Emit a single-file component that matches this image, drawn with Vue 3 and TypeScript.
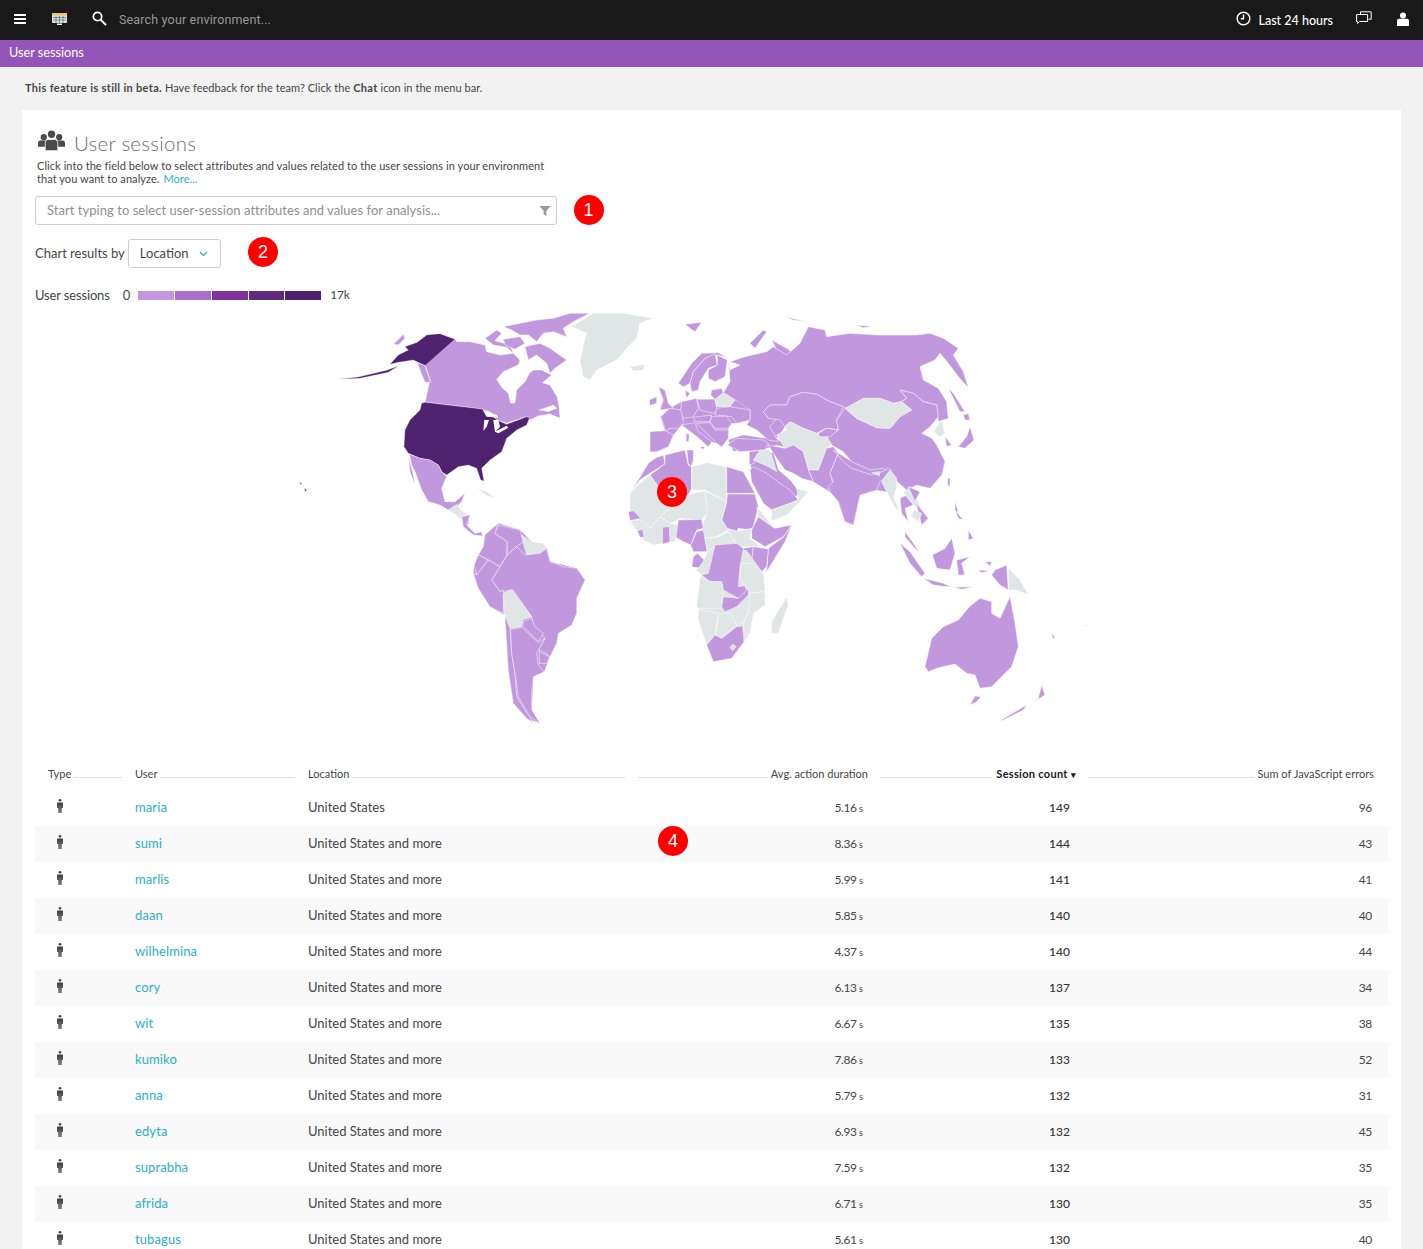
<script setup lang="ts">
type Poly = { c: 'l' | 'd' | 'g' | 'w' | 'bl' | 'bg'; p: string }

const rows = [
  ['maria', 'United States', '5.16', 149, 96],
  ['sumi', 'United States and more', '8.36', 144, 43],
  ['marlis', 'United States and more', '5.99', 141, 41],
  ['daan', 'United States and more', '5.85', 140, 40],
  ['wilhelmina', 'United States and more', '4.37', 140, 44],
  ['cory', 'United States and more', '6.13', 137, 34],
  ['wit', 'United States and more', '6.67', 135, 38],
  ['kumiko', 'United States and more', '7.86', 133, 52],
  ['anna', 'United States and more', '5.79', 132, 31],
  ['edyta', 'United States and more', '6.93', 132, 45],
  ['suprabha', 'United States and more', '7.59', 132, 35],
  ['afrida', 'United States and more', '6.71', 130, 35],
  ['tubagus', 'United States and more', '5.61', 130, 40],
]

const legend = ['#c397df', '#a86fc8', '#7c349c', '#5f2a80', '#4f2270']

// coordinates: (x - 470) * 3, (y - 310) * 3
const canada: Poly[] = [
  { c: 'l', p: '-45,87 -135,165 -120,210 -135,276 35,297 60,306 80,330 110,339 170,320 180,330 205,318 240,312 270,325 268,295 262,262 240,225 218,218 245,195 215,180 190,180 178,190 165,215 140,240 135,278 122,280 115,250 95,232 80,208 100,185 145,165 150,150 130,130 90,135 70,130 50,125 45,105 0,95 -40,95' },
  { c: 'w', p: '205,300 250,285 262,295 235,305' },
  { c: 'l', p: '45,85 80,60 95,70 75,92 120,105 130,130 110,112 70,105' },
  { c: 'l', p: '100,88 150,80 165,100 135,118 105,105' },
  { c: 'l', p: '165,110 210,100 240,115 290,150 255,175 240,190 230,160 200,135 175,150' },
  { c: 'l', p: '100,50 150,40 200,30 250,25 300,10 360,10 310,35 280,55 290,80 250,65 220,70 200,95 175,75 150,75 125,60' },
]

const america: Poly[] = [
  { c: 'd', p: '375,103 330,86 290,90 262,112 225,125 235,135 205,150 180,178 205,172 250,165 285,182' },
  { c: 'l', p: '190,118 220,88 225,100 205,120' },
  { c: 'd', p: '30,222 85,216 170,196 205,183 175,202 90,220' },
  { c: 'l', p: '262,172 285,182 302,232 285,232 270,195' },
  { c: 'd', p: '275,295 285,292 455,312 480,325 500,345 530,358 565,345 590,335 598,340 590,360 560,375 530,400 515,440 480,465 455,490 462,528 452,525 440,490 415,480 385,485 350,510 335,500 325,480 300,465 270,460 235,445 222,425 225,375 240,345 270,315' },
  { c: 'w', p: '458,315 500,330 505,338 470,335' },
  { c: 'w', p: '463,345 477,345 470,365 460,378' },
  { c: 'w', p: '490,345 505,345 510,365 495,382' },
  { c: 'w', p: '495,380 530,362 535,368 505,385' },
  { c: 'l', p: '238,447 270,460 300,465 325,480 335,500 350,515 335,550 345,590 375,590 405,565 395,590 375,610 355,615 330,600 295,590 275,555 255,500 245,480' },
  { c: 'l', p: '235,452 250,510 255,542 240,500' },
  { c: 'g', p: '355,615 380,598 398,620 420,630 400,650 375,628' },
  { c: 'l', p: '395,635 420,628 415,660 400,650' },
  { c: 'g', p: '440,550 470,560 500,580 470,572' },
  { c: 'g', p: '725,65 790,25 880,25 970,40 930,55 920,100 890,130 860,165 800,195 780,225 760,215 750,170 760,120 770,85' },
  { c: 'g', p: '900,185 945,178 940,195 910,198' },
]

const eurasia: Poly[] = [
  { c: 'bl', p: '295,405 340,390 400,400 440,400 470,425 490,420 520,440 535,495 550,530 590,555 600,560 625,590 645,650 670,660 690,570 740,555 770,560 760,490 665,470 625,445 590,430 520,440 440,420 395,435 358,440 365,500 400,580 425,605 470,590 510,565 480,525 445,495 430,445 395,435 310,438' },
  { c: 'bl', p: '300,300 360,320 355,345 415,365 440,400 465,365 480,350 520,370 560,385 590,395 605,420 640,440 665,470 720,495 780,510 830,555 860,540 900,550 935,510 945,470 920,420 905,400 875,385 900,365 925,335 920,300 880,290 800,200 500,200' },
  { c: 'l', p: '165,58 215,52 195,80 180,70' },
  { c: 'l', p: '360,115 400,75 410,80 375,130' },
  { c: 'l', p: '465,35 530,50 490,45' },
  { c: 'l', p: '675,60 730,65 700,68' },
  { c: 'l', p: '425,105 470,130 495,150 470,160 440,135' },
  { c: 'l', p: '295,165 300,195 330,180 300,170 345,155 410,140 430,125 470,150 510,115 535,65 585,75 590,95 660,85 740,90 800,90 860,90 900,85 940,100 985,130 970,150 1000,200 1015,248 985,215 955,175 930,145 915,165 870,185 880,225 925,250 950,290 955,340 925,350 920,300 880,290 850,265 810,255 830,280 815,290 790,295 750,280 700,280 650,310 640,305 600,290 560,268 520,262 480,275 470,300 420,300 400,320 415,340 440,340 420,365 445,410 415,405 380,375 350,360 360,345 360,315 315,285 280,263 300,230 295,165' },
  { c: 'l', p: '955,250 970,265 1005,320 990,320' },
  { c: 'l', p: '400,320 420,300 470,300 480,275 520,262 560,268 600,290 640,305 620,345 625,375 590,370 560,385 520,370 480,350 465,365 450,345 415,340' },
  { c: 'l', p: '645,310 680,340 740,368 780,370 810,335 845,315 815,290 830,280 810,255 850,265 880,290 920,300 925,335 900,365 875,385 905,400 920,420 945,470 935,510 900,550 860,540 830,555 780,510 760,490 720,495 665,470 640,440 605,420 590,395 625,375 620,345' },
  { c: 'g', p: '645,310 700,280 750,280 790,295 815,290 845,315 810,335 780,370 740,368 680,340' },
  { c: 'g', p: '465,365 480,350 520,370 560,385 590,370 625,375 590,395 605,420 590,430 565,495 535,495 520,440 490,420 465,430 440,390 470,375' },
  { c: 'l', p: '565,385 590,370 625,375 600,395 570,395' },
  { c: 'l', p: '535,495 565,495 590,430 610,425 625,445 600,505 610,540 590,555 550,530' },
  { c: 'l', p: '415,420 440,425 465,430 490,420 520,440 535,495 550,530 515,520 490,505 465,495 430,445' },
  { c: 'l', p: '610,435 640,470 665,490 725,510 745,505 775,490 785,495 750,530 740,555 690,570 670,660 645,650 625,590 600,560 595,545 610,530 600,505 625,445' },
  { c: 'g', p: '725,503 750,500 748,512' },
  { c: 'g', p: '755,530 780,495 800,520 800,545 790,575 808,615 795,610 770,560' },
  { c: 'l', p: '810,580 830,570 850,600 825,610 835,650 815,625' },
  { c: 'g', p: '820,565 840,545 880,620 860,610' },
  { c: 'l', p: '835,545 870,560 855,590 895,640 875,660 860,600' },
  { c: 'g', p: '850,615 875,625 865,650 845,635' },
  { c: 'l', p: '985,425 1010,395 1020,365 1032,405 1005,430' },
  { c: 'l', p: '1000,330 1015,325 1020,345 1005,345' },
  { c: 'g', p: '910,380 935,345 945,385 930,395' },
  { c: 'l', p: '945,395 965,420 950,425' },
  { c: 'l', p: '953,518 960,520 960,545 953,540' },
  { c: 'l', p: '975,590 985,620 975,620' },
  { c: 'l', p: '358,440 395,435 380,455 372,475 358,480' },
]

// coordinates: (x - 640) * 3, (y - 340) * 3
const europe: Poly[] = [
  { c: 'bl', p: '30,335 50,335 85,320 100,285 125,255 165,285 205,320 215,305 230,310 245,320 265,295 265,265 275,250 290,250 330,240 330,210 285,180 250,158 225,178 172,178 125,185 90,205 62,230 75,272 30,275' },
  { c: 'l', p: '115,130 155,70 185,40 235,38 265,55 235,45 195,55 160,95 150,130 130,140' },
  { c: 'l', p: '150,130 160,95 195,55 225,42 232,75 205,85 180,125 175,150 155,155' },
  { c: 'l', p: '232,45 262,60 255,110 225,125 205,115 205,90 232,75' },
  { c: 'l', p: '135,150 150,160 140,175' },
  { c: 'l', p: '55,140 75,150 85,190 100,205 60,210 70,180' },
  { c: 'l', p: '28,180 50,170 50,190 30,197' },
  { c: 'l', p: '62,230 90,205 125,210 130,250 115,265 85,265 80,280 70,250' },
  { c: 'l', p: '30,275 75,272 100,285 85,320 50,335 30,335' },
  { c: 'l', p: '125,185 170,175 175,205 160,230 130,235 122,210' },
  { c: 'l', p: '172,178 225,178 230,205 225,220 180,210' },
  { c: 'g', p: '225,180 250,158 285,180 270,200 230,200' },
  { c: 'l', p: '215,150 245,145 250,158 225,178 212,165' },
  { c: 'l', p: '230,205 270,200 330,210 330,240 290,250 275,230 225,225' },
  { c: 'l', p: '215,230 260,228 275,250 265,265 225,265 210,245' },
  { c: 'l', p: '160,232 215,225 210,245 165,245' },
  { c: 'l', p: '125,255 165,248 175,275 215,305 205,320 165,285' },
  { c: 'l', p: '170,250 210,248 225,270 265,270 265,295 245,320 230,310 215,295' },
  { c: 'l', p: '180,320 195,320 188,328' },
  { c: 'l', p: '138,282 148,282 146,305 139,305' },
  { c: 'l', p: '262,315 290,295 370,300 385,310 375,330 300,335' },
]

// coordinates: (x - 620) * 3, (y - 450) * 3
const northAfrica: Poly[] = [
  { c: 'l', p: '130,15 135,42 90,70 60,90 30,130 55,90 85,40 105,25' },
  { c: 'l', p: '135,15 195,0 205,45 215,50 215,115 205,135 150,170 125,125 90,75 135,42' },
  { c: 'l', p: '200,0 220,0 220,30 213,50 205,40' },
  { c: 'g', p: '215,50 260,38 318,50 320,155 255,120 215,120' },
  { c: 'l', p: '320,50 370,65 405,130 320,130' },
  { c: 'l', p: '322,132 405,132 415,170 400,230 390,240 355,235 350,245 320,235 305,210 320,155' },
  { c: 'g', p: '320,235 350,243 395,235 390,265 420,290 355,290 330,255' },
  { c: 'l', p: '415,200 465,235 515,225 490,260 435,290 395,265 395,240' },
  { c: 'l', p: '515,225 495,275 440,365 445,295 490,262' },
  { c: 'g', p: '410,170 430,195 460,232 415,200' },
  { c: 'g', p: '255,122 320,155 305,210 325,240 290,260 255,265 245,235 260,190' },
  { c: 'g', p: '150,172 205,135 255,122 262,190 245,210 185,205 150,220 120,200' },
  { c: 'g', p: '30,130 60,100 90,75 125,125 150,172 120,200 90,235 60,215 30,185' },
  { c: 'l', p: '25,185 40,182 62,205 30,212' },
  { c: 'g', p: '30,212 62,210 90,235 120,200 150,220 175,225 165,275 130,280 100,285 70,270' },
  { c: 'l', p: '128,232 148,230 150,275 127,283' },
  { c: 'l', p: '52,242 68,238 72,262 60,262' },
  { c: 'l', p: '175,210 245,208 250,235 230,240 212,285 190,275 168,262' },
  { c: 'l', p: '250,240 262,305 220,305 212,285 230,245' },
  { c: 'l', p: '232,310 253,330 243,355 215,350 220,320' },
  { c: 'g', p: '262,305 283,285 258,370 228,362 248,345' },
  { c: 'g', p: '255,265 290,262 325,245 350,285 285,285 262,305' },
  { c: 'l', p: '370,295 400,290 395,335 360,340' },
  { c: 'l', p: '400,290 445,297 440,350 425,365 395,335' },
  { c: 'l', p: '390,60 400,50 440,70 480,100 510,120 535,150 510,160 455,180 430,160 395,95' },
  { c: 'g', p: '455,180 510,160 535,150 530,115 565,125 530,165 500,195 455,213' },
  { c: 'g', p: '420,0 450,0 470,65 445,50 400,30' },
]

// coordinates: (x - 420) * 3, (y - 510) * 3
const southern: Poly[] = [
  { c: 'bg', p: '830,180 845,195 835,295 860,405 880,455 935,445 972,395 990,370 1000,310 1035,285 1035,245 1030,190 980,120 880,110' },
  { c: 'l', p: '885,105 950,100 970,115 960,170 955,230 985,225 985,255 955,265 910,240 905,215 870,215 845,195 865,190' },
  { c: 'g', p: '965,160 995,160 1030,190 1035,245 985,250 960,200' },
  { c: 'g', p: '840,200 870,215 905,215 910,245 905,295 835,295 830,290' },
  { c: 'l', p: '910,260 955,265 985,235 985,255 950,290 915,305 905,290' },
  { c: 'g', p: '1035,245 1035,285 1000,310 990,370 975,375 970,340 985,310 990,250' },
  { c: 'g', p: '930,310 965,285 985,305 970,335 950,345' },
  { c: 'g', p: '835,298 895,310 885,375 860,405 835,330' },
  { c: 'g', p: '895,310 930,310 950,345 905,385 888,375' },
  { c: 'l', p: '860,405 885,375 905,385 950,350 968,348 972,395 935,445 880,455 870,430' },
  { c: 'g', p: '940,402 948,410 938,422 930,412' },
  { c: 'g', p: '1100,260 1105,285 1075,370 1055,370 1055,335' },
  { c: 'l', p: '125,20 150,15 140,45 165,70 185,65 188,78 160,75 130,50' },
  { c: 'bl', p: '195,75 235,40 300,60 335,95 380,115 390,155 470,175 495,210 470,265 470,310 455,345 415,370 410,400 390,440 372,485 340,500 335,600 360,640 320,625 280,580 265,480 255,315 210,290 175,235 160,190 163,165 175,135 190,110' },
  { c: 'l', p: '195,75 235,40 225,70 262,95 260,135 240,170 205,150 175,135 190,110' },
  { c: 'l', p: '235,45 300,60 310,95 290,110 262,135 262,95 225,70' },
  { c: 'g', p: '305,75 335,95 370,100 380,115 360,130 320,135 310,100' },
  { c: 'l', p: '240,170 262,135 290,110 315,135 360,130 380,115 390,155 430,170 470,175 495,210 470,265 470,310 455,345 415,370 410,400 390,440 370,425 355,420 375,385 340,345 335,320 280,240 240,245 215,210' },
  { c: 'l', p: '175,135 205,150 170,195 163,165' },
  { c: 'l', p: '170,195 205,150 240,170 215,210 240,245 250,240 250,310 210,290 175,235 160,190' },
  { c: 'g', p: '250,250 275,238 335,320 308,330 305,350 270,355 252,310' },
  { c: 'l', p: '310,335 335,325 345,350 370,370 355,395 310,350' },
  { c: 'l', p: '255,315 270,355 275,430 285,490 290,560 340,640 320,625 280,580 265,480 260,400' },
  { c: 'l', p: '272,358 305,352 355,398 375,385 350,430 355,465 372,485 340,500 335,550 335,600 360,640 330,620 295,560 285,490 275,430' },
  { c: 'l', p: '358,425 388,440 380,460 358,460' },
]

const oceania: Poly[] = [
  { c: 'l', p: '75,470 95,385 130,350 175,330 210,288 240,265 275,275 275,310 300,325 330,260 345,340 355,410 335,470 275,530 240,535 225,495 200,490 165,462 110,475 85,485' },
  { c: 'l', p: '225,558 243,560 230,575 210,585' },
  { c: 'l', p: '300,632 380,585 370,600 310,630' },
  { c: 'l', p: '395,580 435,555 425,525 415,565' },
  { c: 'l', p: '255,155 275,155 270,168' },
  { c: 'l', p: '285,180 320,165 325,240 300,225 275,195' },
  { c: 'g', p: '325,175 360,210 385,255 350,240 325,240' },
  { c: 'l', p: '97,135 135,115 155,85 165,130 150,180 110,175' },
  { c: 'l', p: '170,150 210,140 185,160 195,195 175,195' },
  { c: 'l', p: '0,100 30,125 75,190 65,200 30,160' },
  { c: 'l', p: '70,205 130,220 155,232 100,225' },
  { c: 'l', p: '15,65 40,100 60,130 40,110 15,80' },
  { c: 'l', p: '205,60 220,85 205,90' },
  { c: 'l', p: '165,0 190,30 175,25' },
  { c: 'l', p: '160,232 220,230 185,238' },
  { c: 'l', p: '235,180 270,182 245,188' },
  { c: 'l', p: '455,365 465,385 458,385' },
  { c: 'g', p: '552,345 563,345 555,351' },
]

const layers: { t: string; polys: Poly[] }[] = [
  { t: 'translate(470 310) scale(.33333)', polys: canada },
  { t: 'translate(330 305) scale(.33333)', polys: america },
  { t: 'translate(630 305) scale(.33333)', polys: eurasia },
  { t: 'translate(640 340) scale(.33333)', polys: europe },
  { t: 'translate(620 450) scale(.33333)', polys: northAfrica },
  { t: 'translate(420 510) scale(.33333)', polys: southern },
  { t: 'translate(900 510) scale(.33333)', polys: oceania },
]
</script>

<template>
  <div class="page">
    <header class="topbar">
      <svg class="ic-menu" width="12" height="10" viewBox="0 0 12 10"><path d="M0 0h12v2H0zM0 4h12v2H0zM0 8h12v2H0z" fill="#fff" /></svg>
      <svg class="ic-grid" width="15" height="13" viewBox="0 0 15 13">
        <rect x="0" y="0" width="15" height="10" rx="1" fill="#e6e2cf" />
        <rect x="0" y="0" width="15" height="2.500" rx="1" fill="#f0c070" />
        <path d="M1 4.500h13M1 7h13M4 3v7M7.500 3v7M11 3v7" stroke="#4f7f9f" stroke-width=".8" />
        <rect x="5" y="10.500" width="5" height="1.500" fill="#eee" />
      </svg>
      <svg class="ic-search" width="15" height="15" viewBox="0 0 15 15"><circle cx="5.500" cy="5.500" r="4.200" fill="none" stroke="#fff" stroke-width="1.700" /><path d="M8.700 8.700l5.300 5.300" stroke="#fff" stroke-width="2" /></svg>
      <span class="search-text">Search your environment...</span>
      <svg class="ic-clock" width="15" height="15" viewBox="0 0 15 15"><circle cx="7.500" cy="7.500" r="6.300" fill="none" stroke="#fff" stroke-width="1.500" /><path d="M7.500 3.500v4.300H4.800" fill="none" stroke="#fff" stroke-width="1.400" /></svg>
      <span class="timeframe">Last 24 hours</span>
      <svg class="ic-chat" width="16" height="14" viewBox="0 0 16 14"><path d="M4.500 3V.8h10.700v7.400H12.500" fill="none" stroke="#fff" stroke-width="1" /><path d="M.6 3.500h11v7H3.500l-1.800 2v-2H.6z" fill="#191919" stroke="#fff" stroke-width="1" /></svg>
      <svg class="ic-user" width="12" height="14" viewBox="0 0 12 14"><circle cx="6" cy="3.500" r="3" fill="#fff" /><path d="M0 8.500q0-1.500 2-1.800h8q2 .3 2 1.800V14H0z" fill="#fff" /></svg>
    </header>
    <div class="subbar">User sessions</div>
    <p class="beta"><b>This feature is still in beta.</b> Have feedback for the team? Click the <b>Chat</b> icon in the menu bar.</p>

    <main class="card">
      <div class="intro">
        <div class="title-row">
          <svg width="27" height="22" viewBox="0 0 28 22" fill="#4a4a4a">
            <circle cx="6" cy="7" r="3.200" /><circle cx="22" cy="7" r="3.200" /><circle cx="14" cy="4" r="3.800" />
            <path d="M0 17v-4q0-2 2-2.500h8q2 .5 2 2.500v4zM16 17v-4q0-2 2-2.500h8q2 .5 2 2.500v4z" />
            <path d="M7.500 21v-8q0-3 2.500-3.500h8q2.500.5 2.500 3.500v8z" stroke="#fff" stroke-width=".8" />
          </svg>
          <h1>User sessions</h1>
        </div>
        <p class="desc">Click into the field below to select attributes and values related to the user sessions in your environment<br />that you want to analyze. <a>More...</a></p>
      </div>

      <div class="controls">
        <div class="field">
          <span>Start typing to select user-session attributes and values for analysis...</span>
          <svg width="12" height="12" viewBox="0 0 12 12"><path d="M.5 1h11L7.300 6v5L4.700 9.500V6z" fill="#999" /></svg>
        </div>
        <div class="chart-by">
          <span>Chart results by</span>
          <div class="select">
            <span>Location</span>
            <svg width="9" height="6" viewBox="0 0 9 6"><path d="M1 1l3.500 3.500L8 1" fill="none" stroke="#2ab0c5" stroke-width="1.200" /></svg>
          </div>
        </div>
        <div class="legend">
          <span class="legend-name">User sessions</span>
          <span class="legend-min">0</span>
          <div class="legend-bar">
            <i v-for="c in legend" :key="c" :style="{ background: c }"></i>
          </div>
          <span class="legend-max">17k</span>
        </div>
      </div>

      <svg class="map" width="1379" height="440" viewBox="22 305 1379 440">
        <g v-for="layer in layers" :key="layer.t" :transform="layer.t">
          <polygon v-for="(s, i) in layer.polys" :key="i" :class="s.c" :points="s.p" />
        </g>
        <path class="d" d="M299 482l3 1-1 2zM304 488l3 2-2 2z" />
      </svg>

      <section class="table">
        <div class="row head">
          <div class="th th-type"><span>Type</span><i></i></div>
          <div class="th"><span>User</span><i></i></div>
          <div class="th"><span>Location</span><i></i></div>
          <div class="th num"><i></i><span>Avg. action duration</span></div>
          <div class="th num sorted"><i></i><span>Session count <small>▾</small></span></div>
          <div class="th num last"><i></i><span>Sum of JavaScript errors</span></div>
        </div>
        <div v-for="r in rows" :key="r[0]" class="row body">
          <div class="type">
            <svg width="6" height="14" viewBox="0 0 6 14">
              <defs><linearGradient id="pg" x1="0" y1="0" x2="0" y2="1"><stop offset="0" stop-color="#3d3d3d" /><stop offset="1" stop-color="#808080" /></linearGradient></defs>
              <circle cx="3" cy="1.300" r="1.300" fill="#3d3d3d" />
              <path d="M0 3.500h6V9H4.800v5H1.200V9H0z" fill="url(#pg)" />
            </svg>
          </div>
          <a class="cell text">{{ r[0] }}</a>
          <div class="cell text">{{ r[1] }}</div>
          <div class="cell val dur">{{ r[2] }} <small>s</small></div>
          <div class="cell val count">{{ r[3] }}</div>
          <div class="cell val errs">{{ r[4] }}</div>
        </div>
      </section>
    </main>

    <span class="badge b1">1</span>
    <span class="badge b2">2</span>
    <span class="badge b3">3</span>
    <span class="badge b4">4</span>
  </div>
</template>

<style>
html, body { margin: 0; background: #f2f2f2; overflow: hidden; }
</style>

<style scoped>
.page {
  position: relative;
  height: 1249px;
  overflow: hidden;
  background: #f2f2f2;
  color: #454646;
  font: 12px/16px Lato, "Open Sans", sans-serif;
}
.topbar {
  height: 40px;
  background: #191919;
  display: flex;
  align-items: center;
  color: #fff;
}
.ic-menu { margin-left: 14px; margin-top: -2px; }
.ic-grid { margin-left: 26px; margin-top: -2px; }
.ic-search { margin-left: 25px; margin-top: -3px; }
.search-text {
  margin-left: 12px;
  margin-top: -2px;
  color: #9a9a9a;
  font: 12.500px Roboto, sans-serif;
  letter-spacing: .16px;
  flex: 1;
}
.ic-clock { margin-top: -3px; }
.timeframe { margin-left: 7px; margin-top: 2px; font-size: 12.500px; font-weight: 500; }
.ic-chat { margin-left: 23px; margin-top: -4px; }
.ic-user { margin-left: 25px; margin-right: 14px; margin-top: -3px; }
.subbar {
  height: 27px;
  background: #9355b7;
  color: #fff;
  line-height: 25px;
  padding-left: 9px;
  font-size: 12.700px;
}
.beta { margin: 0; height: 43px; padding: 13px 0 0 25px; box-sizing: border-box; font-size: 11px; line-height: 16px; letter-spacing: .05px; }
.beta b { letter-spacing: .33px; }
.card { margin: 0 22px; background: #fff; height: 1200px; }
.intro { padding: 17px 15px 0; }
.title-row { display: flex; align-items: center; gap: 9px; height: 32px; }
.title-row svg { margin-top: -4px; margin-left: 1px; }
h1 { margin: 0; font-size: 20.500px; line-height: 32px; font-weight: 300; color: #6d6d75; letter-spacing: .25px; }
.desc { margin: 0; font-size: 11px; line-height: 13px; color: #454646; letter-spacing: .065px; }
.desc a { color: #2ab0c5; margin-left: 1px; }
.controls { padding: 11px 13px 0; }
.field {
  width: 522px;
  height: 29px;
  box-sizing: border-box;
  border: 1px solid #ccc;
  border-radius: 3px;
  padding: 0 5px 0 11px;
  display: flex;
  align-items: center;
  justify-content: space-between;
  color: #8f8f8f;
  font-size: 13px;
  letter-spacing: .04px;
}
.field span { margin-top: -2px; }
.chart-by { display: flex; align-items: center; gap: 3px; margin-top: 14px; font-size: 13px; }
.chart-by span { margin-top: -2px; }
.select {
  width: 93px;
  height: 29px;
  box-sizing: border-box;
  border: 1px solid #ccc;
  border-radius: 3px;
  padding: 0 12px 0 11px;
  display: flex;
  align-items: center;
  justify-content: space-between;
}
.legend { display: flex; align-items: center; height: 16px; margin-top: 19px; font-size: 13px; }
.legend-name { letter-spacing: -.15px; }
.legend-min { margin-left: 13px; }
.legend-bar { display: flex; gap: 1px; margin-left: 8px; }
.legend-bar i { width: 35.800px; height: 9px; display: block; }
.legend-max { margin-left: 9px; font-size: 12px; letter-spacing: -.2px; }
.map { display: block; margin-top: 2px; }
.l { fill: #c197de; stroke: #fff; stroke-width: 1.500; stroke-linejoin: round; }
.d { fill: #4f2270; stroke: #e8dff0; stroke-width: .9; stroke-linejoin: round; }
.g { fill: #e0e5e5; stroke: #fff; stroke-width: 1.500; stroke-linejoin: round; }
.bl { fill: #c197de; }
.bg { fill: #e0e5e5; }
.w { fill: #fff; stroke: none; }
.table { margin: 0 13px; padding-top: 20px; }
.row {
  display: grid;
  grid-template-columns: 87px 173px 330px 245px 208px 309px;
  align-items: center;
}
.head { height: 25px; align-items: start; font-size: 11px; }
.th { display: flex; align-items: center; height: 18px; padding-left: 13px; gap: 3px; box-sizing: border-box; white-space: nowrap; }
.th i { flex: 1; height: 1px; background: #e2e2e2; margin-top: 6px; }
.th.num { padding-right: 2px; }
.th.last { padding-right: 13px; padding-left: 10px; letter-spacing: .02px; }
.th.sorted { font-weight: 700; color: #191919; padding-right: 2px; padding-left: 10px; letter-spacing: .3px; }
.th.sorted small { font-size: 9px; }
.body { height: 36px; font-size: 13px; }
.body:nth-of-type(odd) { background: #f9f9f9; }
.type { padding-left: 22px; display: flex; }
.type svg { margin-top: -4px; }
.cell { padding-left: 13px; }
.text { margin-top: -2px; }
a.cell { color: #2ab0c5; letter-spacing: .1px; }
.val { text-align: right; padding-left: 0; font-size: 12px; }
.val small { font-size: 9px; }
.dur { padding-right: 7px; letter-spacing: -.45px; }
.dur small { letter-spacing: 0; }
.count { padding-right: 8px; font-weight: 500; color: #333; }
.errs { padding-right: 15px; letter-spacing: -.3px; }
.badge {
  position: absolute;
  width: 30px;
  height: 30px;
  border-radius: 50%;
  background: #f00;
  color: #fff;
  font: 18px/30px "Liberation Sans", sans-serif;
  text-align: center;
}
.b1 { left: 573.500px; top: 194.500px; }
.b2 { left: 248px; top: 237px; }
.b3 { left: 657px; top: 476.500px; }
.b4 { left: 658px; top: 826px; }
</style>
